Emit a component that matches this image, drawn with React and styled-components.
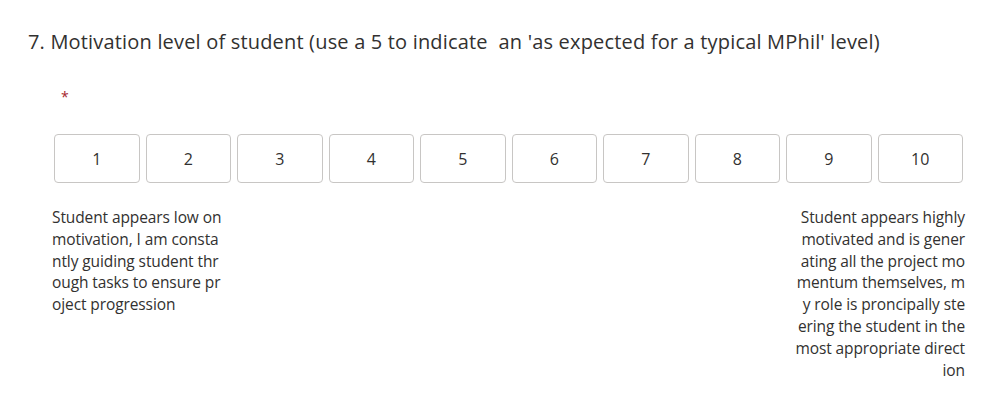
import React from 'react';
import styled, { createGlobalStyle } from 'styled-components';

const GlobalStyle = createGlobalStyle`
  body {
    margin: 0;
    background: #fff;
    font-family: 'Open Sans', 'Noto Sans', sans-serif;
    color: #323130;
  }
`;

const Wrapper = styled.div`
  box-sizing: border-box;
  width: 998px;
  height: 407px;
  padding: 27px 36px 0 28px;
`;

const Title = styled.div`
  font-size: 20px;
  line-height: 30px;
  letter-spacing: 0.18px;
  white-space: pre;
`;

const Required = styled.div`
  margin: 30px 0 0 33px;
  color: #a4262c;
  font-size: 14px;
  line-height: 20px;
`;

const Scale = styled.div`
  display: flex;
  gap: 6px;
  margin: 27px 0 0 26px;
`;

const ScaleButton = styled.button`
  flex: 0 0 85.5px;
  height: 49px;
  box-sizing: border-box;
  border: 1px solid #c8c6c4;
  border-radius: 4px;
  background: #fff;
  font-family: inherit;
  font-size: 16px;
  color: #323130;
  padding: 0;
  cursor: pointer;
`;

const Labels = styled.div`
  display: flex;
  justify-content: space-between;
  margin: 24px 0 0 24px;
  width: 913px;
`;

const Label = styled.div`
  width: 170px;
  font-size: 15.5px;
  line-height: 21.8px;
  letter-spacing: -0.1px;
  word-break: break-all;
  text-align: ${(p) => p.$align};
`;

const values = [1, 2, 3, 4, 5, 6, 7, 8, 9, 10];

export default function App() {
  return (
    <Wrapper>
      <GlobalStyle />
      <Title>7. Motivation level of student (use a 5 to indicate  an 'as expected for a typical MPhil' level)</Title>
      <Required>*</Required>
      <Scale>
        {values.map((v) => (
          <ScaleButton key={v} type="button">{v}</ScaleButton>
        ))}
      </Scale>
      <Labels>
        <Label $align="left">
          Student appears low on motivation, I am constantly guiding student through tasks to ensure project progression
        </Label>
        <Label $align="right">
          Student appears highly motivated and is generating all the project momentum themselves, my role is proncipally steering the student in the most appropriate direction
        </Label>
      </Labels>
    </Wrapper>
  );
}
